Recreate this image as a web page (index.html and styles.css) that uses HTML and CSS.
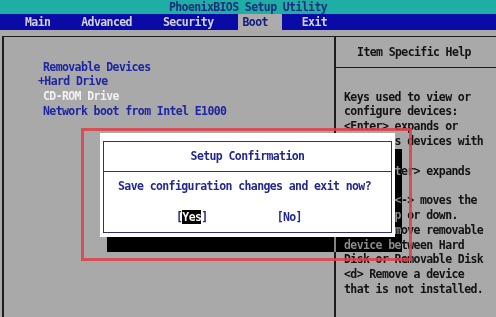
FILE: index.html
```html
<html>
<head>
<meta charset="utf-8" />
<title>PhoenixBIOS Setup Utility</title>
<link rel="stylesheet" href="styles.css">
</head>
<body>
<div class="screen">
	<div class="titlebar">PhoenixBIOS Setup Utility</div>
	<div class="menubar">
		<span class="tab tab-main">Main</span>
		<span class="tab tab-advanced">Advanced</span>
		<span class="tab tab-security">Security</span>
		<span class="tab tab-boot active">Boot</span>
		<span class="tab tab-exit">Exit</span>
	</div>

	<div class="frame">
		<div class="items">
			<div class="item">Removable Devices</div>
			<div class="item"><span class="plus">+</span>Hard Drive</div>
			<div class="item selected">CD-ROM Drive</div>
			<div class="item">Network boot from Intel E1000</div>
		</div>
		<div class="help">
			<div class="help-title">Item Specific Help</div>
			<div class="help-text">
				<div>Keys used to view or</div>
				<div>configure devices:</div>
				<div>&lt;Enter&gt; expands or</div>
				<div>collapses devices with</div>
				<div>a + or -</div>
				<div>&lt;Ctrl+Enter&gt; expands</div>
				<div>all</div>
				<div>&lt;+&gt; and &lt;-&gt; moves the</div>
				<div>device up or down.</div>
				<div>&lt;n&gt; May move removable</div>
				<div>device between Hard</div>
				<div>Disk or Removable Disk</div>
				<div>&lt;d&gt; Remove a device</div>
				<div>that is not installed.</div>
			</div>
		</div>
	</div>

	<!-- popup -->
	<div class="shadow"></div>
	<div class="dialog">
		<div class="dialog-box">
			<div class="dialog-title">Setup Confirmation</div>
			<div class="dialog-msg">Save configuration changes and exit now?</div>
			<div class="dialog-buttons">
				<span class="btn">[<span class="btn-on">Yes</span>]</span>
				<span class="btn">[No]</span>
			</div>
		</div>
	</div>

	<div class="mark"></div>
</div>
</body>
</html>
```

FILE: styles.css
```css
body{
	margin: 0;
	background: #a9a9a9;
}

.screen{
	position: relative;
	width: 496px;
	height: 317px;
	overflow: hidden;
	background: #a9a9a9;
	font-family: "DejaVu Sans Mono", "Liberation Mono", monospace;
	font-size: 11.5px;
	font-weight: bold;
	letter-spacing: -0.6px;
}

.titlebar{
	height: 14px;
	line-height: 14px;
	background: #1fada6;
	color: #1a2f7c;
	text-align: center;
}

.menubar{
	display: flex;
	height: 16px;
	line-height: 16px;
	background: #0a0aa6;
	color: #d2d4e0;
}

.tab-main{
	margin-left: 25px;
}

.tab-advanced{
	margin-left: 31px;
}

.tab-security{
	margin-left: 31px;
}

.tab-boot{
	margin-left: 25px;
	padding: 0 14px 0 4px;
}

.tab-exit{
	margin-left: 20px;
}

.active{
	background: #acacac;
	color: #13207a;
}

.frame{
	display: grid;
	grid-template-columns: 332px 1fr;
	margin: 6px 0 0 2px;
	height: 281px;
	border-top: 1px solid #1c1c1c;
}

.items{
	border-left: 2px solid #1c1c1c;
	padding: 22.6px 0 0 39px;
}

.item{
	height: 14.8px;
	line-height: 14.8px;
	color: #1d26a0;
}

.plus{
	margin-left: -5px;
}

.item.selected{
	color: #f2f2f2;
}

.help{
	border-left: 2px solid #1c1c1c;
	color: #121212;
}

.help-title{
	height: 30px;
	line-height: 30px;
	text-align: center;
	border-bottom: 1px solid #1c1c1c;
	padding-right: 4px;
}

.help-text{
	padding: 21.6px 0 0 8px;
}

.help-text div{
	height: 14.8px;
	line-height: 14.8px;
	white-space: nowrap;
}

/* black shadow, text under it shows dim gray */
.shadow{
	position: absolute;
	left: 107px;
	top: 149px;
	width: 295px;
	height: 103px;
	background: transparent;
	backdrop-filter: invert(1) brightness(0.571) contrast(1.7);
}

.dialog{
	position: absolute;
	left: 100px;
	top: 133px;
	width: 295px;
	height: 104px;
	box-sizing: border-box;
	padding: 8px 3px 4px 3px;
	background: #fff;
}

.dialog-box{
	height: 100%;
	box-sizing: border-box;
	border: 1.5px solid #2e2e86;
	color: #24288e;
}

.dialog-title{
	height: 29px;
	line-height: 29px;
	text-align: center;
	border-bottom: 1.5px solid #2e2e86;
}

.dialog-msg{
	margin-top: 7px;
	line-height: 15px;
	text-align: center;
	padding-right: 6px;
}

.dialog-buttons{
	display: flex;
	margin: 16px 0 0 72px;
	line-height: 15px;
	gap: 69px;
}

.btn-on{
	background: #000;
	color: #f4f4f4;
}

.mark{
	position: absolute;
	left: 81px;
	top: 128px;
	width: 331px;
	height: 133px;
	box-sizing: border-box;
	border: 3px solid rgba(222, 62, 72, 0.85);
}
```
